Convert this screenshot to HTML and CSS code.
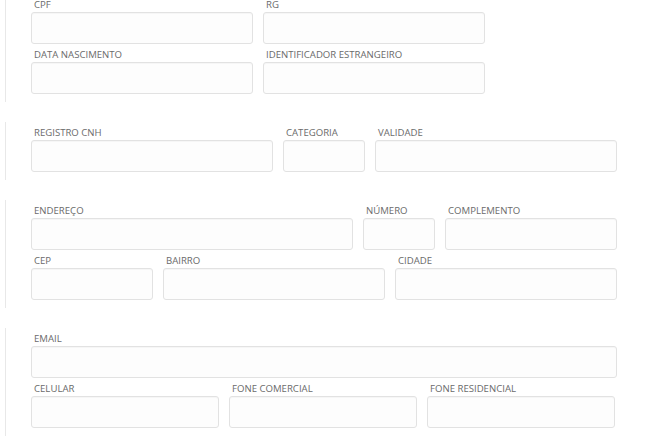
FILE: index.html
```html
<!DOCTYPE html>
<html lang="pt-BR">
<head>
<meta charset="utf-8">
<title>Cadastro</title>
<link rel="stylesheet" href="styles.css">
</head>
<body>
<div class="form">
  <section class="block">
    <div class="row">
      <div class="field w222"><label>CPF</label><input type="text"></div>
      <div class="field w222"><label>RG</label><input type="text"></div>
    </div>
    <div class="row">
      <div class="field w222"><label>DATA NASCIMENTO</label><input type="text"></div>
      <div class="field w222"><label>IDENTIFICADOR ESTRANGEIRO</label><input type="text"></div>
    </div>
  </section>
  <section class="block">
    <div class="row">
      <div class="field w242"><label>REGISTRO CNH</label><input type="text"></div>
      <div class="field w82"><label>CATEGORIA</label><input type="text"></div>
      <div class="field w242"><label>VALIDADE</label><input type="text"></div>
    </div>
  </section>
  <section class="block">
    <div class="row">
      <div class="field w322"><label>ENDEREÇO</label><input type="text"></div>
      <div class="field w72"><label>NÚMERO</label><input type="text"></div>
      <div class="field w172"><label>COMPLEMENTO</label><input type="text"></div>
    </div>
    <div class="row">
      <div class="field w122"><label>CEP</label><input type="text"></div>
      <div class="field w222"><label>BAIRRO</label><input type="text"></div>
      <div class="field w222"><label>CIDADE</label><input type="text"></div>
    </div>
  </section>
  <section class="block">
    <div class="row">
      <div class="field w586"><label>EMAIL</label><input type="text"></div>
    </div>
    <div class="row">
      <div class="field w188"><label>CELULAR</label><input type="text"></div>
      <div class="field w188"><label>FONE COMERCIAL</label><input type="text"></div>
      <div class="field w188"><label>FONE RESIDENCIAL</label><input type="text"></div>
    </div>
  </section>
</div>
</body>
</html>
```

FILE: styles.css
```css
html, body {
  margin: 0;
  padding: 0;
  background: #ffffff;
}
body {
  font-family: "Open Sans", "Liberation Sans", sans-serif;
  color: #6b6b6b;
}
.form {
  margin-top: -6px;
  margin-left: 5px;
  display: flex;
  flex-direction: column;
  gap: 20px;
}
.block {
  border-left: 1px solid #e8e8e8;
  padding: 4px 0 8px 25px;
  display: flex;
  flex-direction: column;
  gap: 4px;
}
.row {
  display: flex;
  gap: 10px;
}
.field {
  display: flex;
  flex-direction: column;
}
.field label {
  display: block;
  height: 14px;
  line-height: 14px;
  font-size: 9.6px;
  padding-left: 3px;
  color: #6b6b6b;
  white-space: nowrap;
}
.field input {
  box-sizing: border-box;
  height: 32px;
  width: 100%;
  margin: 0;
  border: 1px solid #e2e2e2;
  border-radius: 3px;
  background: #fdfdfd;
  box-shadow: inset 0 1px 1px rgba(0, 0, 0, 0.03);
  outline: none;
  font: inherit;
}
.w72 { width: 72px; }
.w82 { width: 82px; }
.w122 { width: 122px; }
.w172 { width: 172px; }
.w188 { width: 188px; }
.w222 { width: 222px; }
.w242 { width: 242px; }
.w322 { width: 322px; }
.w586 { width: 586px; }
```
